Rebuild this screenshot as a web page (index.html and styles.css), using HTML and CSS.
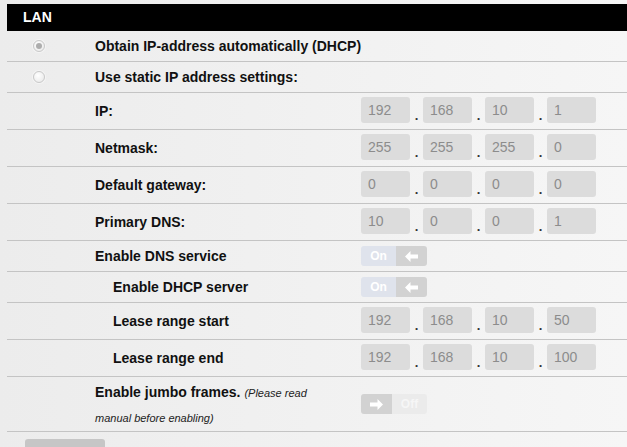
FILE: index.html
```html
<!DOCTYPE html>
<html lang="en">
<head>
    <meta charset="UTF-8">
    <title>LAN settings</title>
    <link rel="stylesheet" href="styles.css">
</head>
<body>
    <div class="panel">
        <div class="panel-head">LAN</div>

        <!-- address mode -->
        <div class="row row-short">
            <div class="lead"><span class="radio checked"></span></div>
            <div class="label wide">Obtain IP-address automatically (DHCP)</div>
        </div>
        <div class="row row-short">
            <div class="lead"><span class="radio"></span></div>
            <div class="label wide">Use static IP address settings:</div>
        </div>

        <!-- static settings -->
        <div class="row">
            <div class="lead"></div>
            <div class="label">IP:</div>
            <div class="ip">
                <span class="octet">192</span><span class="dot">.</span>
                <span class="octet">168</span><span class="dot">.</span>
                <span class="octet">10</span><span class="dot">.</span>
                <span class="octet">1</span>
            </div>
        </div>
        <div class="row">
            <div class="lead"></div>
            <div class="label">Netmask:</div>
            <div class="ip">
                <span class="octet">255</span><span class="dot">.</span>
                <span class="octet">255</span><span class="dot">.</span>
                <span class="octet">255</span><span class="dot">.</span>
                <span class="octet">0</span>
            </div>
        </div>
        <div class="row">
            <div class="lead"></div>
            <div class="label">Default gateway:</div>
            <div class="ip">
                <span class="octet">0</span><span class="dot">.</span>
                <span class="octet">0</span><span class="dot">.</span>
                <span class="octet">0</span><span class="dot">.</span>
                <span class="octet">0</span>
            </div>
        </div>
        <div class="row">
            <div class="lead"></div>
            <div class="label">Primary DNS:</div>
            <div class="ip">
                <span class="octet">10</span><span class="dot">.</span>
                <span class="octet">0</span><span class="dot">.</span>
                <span class="octet">0</span><span class="dot">.</span>
                <span class="octet">1</span>
            </div>
        </div>

        <!-- services -->
        <div class="row row-short">
            <div class="lead"></div>
            <div class="label">Enable DNS service</div>
            <div class="toggle">
                <span class="toggle-text on">On</span>
                <span class="toggle-knob">
                    <svg width="13" height="11" viewBox="0 0 13 11"><path d="M0 5.5 L5.5 0 L5.5 3.5 L13 3.5 L13 7.5 L5.5 7.5 L5.5 11 Z" fill="#fff"/></svg>
                </span>
            </div>
        </div>
        <div class="row row-short">
            <div class="lead"></div>
            <div class="label sub">Enable DHCP server</div>
            <div class="toggle">
                <span class="toggle-text on">On</span>
                <span class="toggle-knob">
                    <svg width="13" height="11" viewBox="0 0 13 11"><path d="M0 5.5 L5.5 0 L5.5 3.5 L13 3.5 L13 7.5 L5.5 7.5 L5.5 11 Z" fill="#fff"/></svg>
                </span>
            </div>
        </div>
        <div class="row">
            <div class="lead"></div>
            <div class="label sub">Lease range start</div>
            <div class="ip">
                <span class="octet">192</span><span class="dot">.</span>
                <span class="octet">168</span><span class="dot">.</span>
                <span class="octet">10</span><span class="dot">.</span>
                <span class="octet">50</span>
            </div>
        </div>
        <div class="row">
            <div class="lead"></div>
            <div class="label sub">Lease range end</div>
            <div class="ip">
                <span class="octet">192</span><span class="dot">.</span>
                <span class="octet">168</span><span class="dot">.</span>
                <span class="octet">10</span><span class="dot">.</span>
                <span class="octet">100</span>
            </div>
        </div>

        <div class="row row-tall">
            <div class="lead"></div>
            <div class="label jumbo">Enable jumbo frames. <span class="note">(Please read manual before enabling)</span></div>
            <div class="toggle">
                <span class="toggle-knob">
                    <svg width="13" height="11" viewBox="0 0 13 11"><path d="M13 5.5 L7.5 0 L7.5 3.5 L0 3.5 L0 7.5 L7.5 7.5 L7.5 11 Z" fill="#fff"/></svg>
                </span>
                <span class="toggle-text off">Off</span>
            </div>
        </div>

        <button class="save" aria-label="Save"></button>
    </div>
</body>
</html>
```

FILE: styles.css
```css
body {
    margin: 0;
    font-family: "Liberation Sans", Arial, sans-serif;
    font-size: 14px;
    color: #111;
    background: linear-gradient(to right, #ececec, #f6f6f6);
    overflow: hidden;
}

.panel {
    padding: 4px 0 0 7px;
}

.panel-head {
    height: 27px;
    line-height: 27px;
    padding-left: 16px;
    background-color: #000;
    color: #fff;
    font-weight: bold;
}

.row {
    display: flex;
    align-items: center;
    height: 37px;
    box-sizing: border-box;
    border-bottom: 1px solid #c4c4c4;
}

.row-short {
    height: 31px;
}

.row-tall {
    height: 55px;
}

.lead {
    width: 88px;
    flex-shrink: 0;
}

.label {
    width: 266px;
    flex-shrink: 0;
    font-weight: bold;
    box-sizing: border-box;
}

.label.wide {
    width: auto;
}

.label.sub {
    padding-left: 18px;
}

.label.jumbo {
    line-height: 24px;
    padding-top: 1px;
    padding-right: 42px;
}

.note {
    font-weight: normal;
    font-style: italic;
    font-size: 11px;
    color: #222;
}

.radio {
    display: block;
    width: 10px;
    height: 10px;
    margin-left: 26px;
    border: 1px solid #c9c9c9;
    border-radius: 50%;
    background: radial-gradient(circle at 40% 35%, #fff, #e6e6e6);
    box-shadow: 0 0 0 1px #f4f4f4;
    position: relative;
}

.radio.checked::after {
    content: "";
    position: absolute;
    left: 2px;
    top: 2px;
    width: 6px;
    height: 6px;
    border-radius: 50%;
    background-color: #adadad;
}

.ip {
    display: flex;
    align-items: flex-end;
    padding-bottom: 3px;
}

.octet {
    width: 49px;
    height: 26px;
    line-height: 26px;
    box-sizing: border-box;
    padding-left: 7px;
    background-color: #dcdcdc;
    border-radius: 3px;
    color: #8c8c8c;
}

.dot {
    width: 13px;
    text-align: center;
    line-height: 14px;
    font-weight: bold;
    color: #333;
    font-size: 13px;
}

.toggle {
    display: flex;
    height: 20px;
    border-radius: 3px;
    overflow: hidden;
}

.toggle-text {
    width: 35px;
    line-height: 20px;
    text-align: center;
    color: #fff;
    font-size: 12px;
    font-weight: bold;
}

.toggle-text.on {
    background-color: #dfe3ec;
}

.toggle-text.off {
    background-color: #ebebeb;
    color: #f6f6f6;
}

.toggle-knob {
    width: 31px;
    display: flex;
    align-items: center;
    justify-content: center;
    background-color: #d2d2d2;
}

.save {
    display: block;
    margin: 7px 0 0 18px;
    width: 80px;
    height: 30px;
    border: none;
    border-radius: 3px;
    background-color: #c6c6c6;
}
```
